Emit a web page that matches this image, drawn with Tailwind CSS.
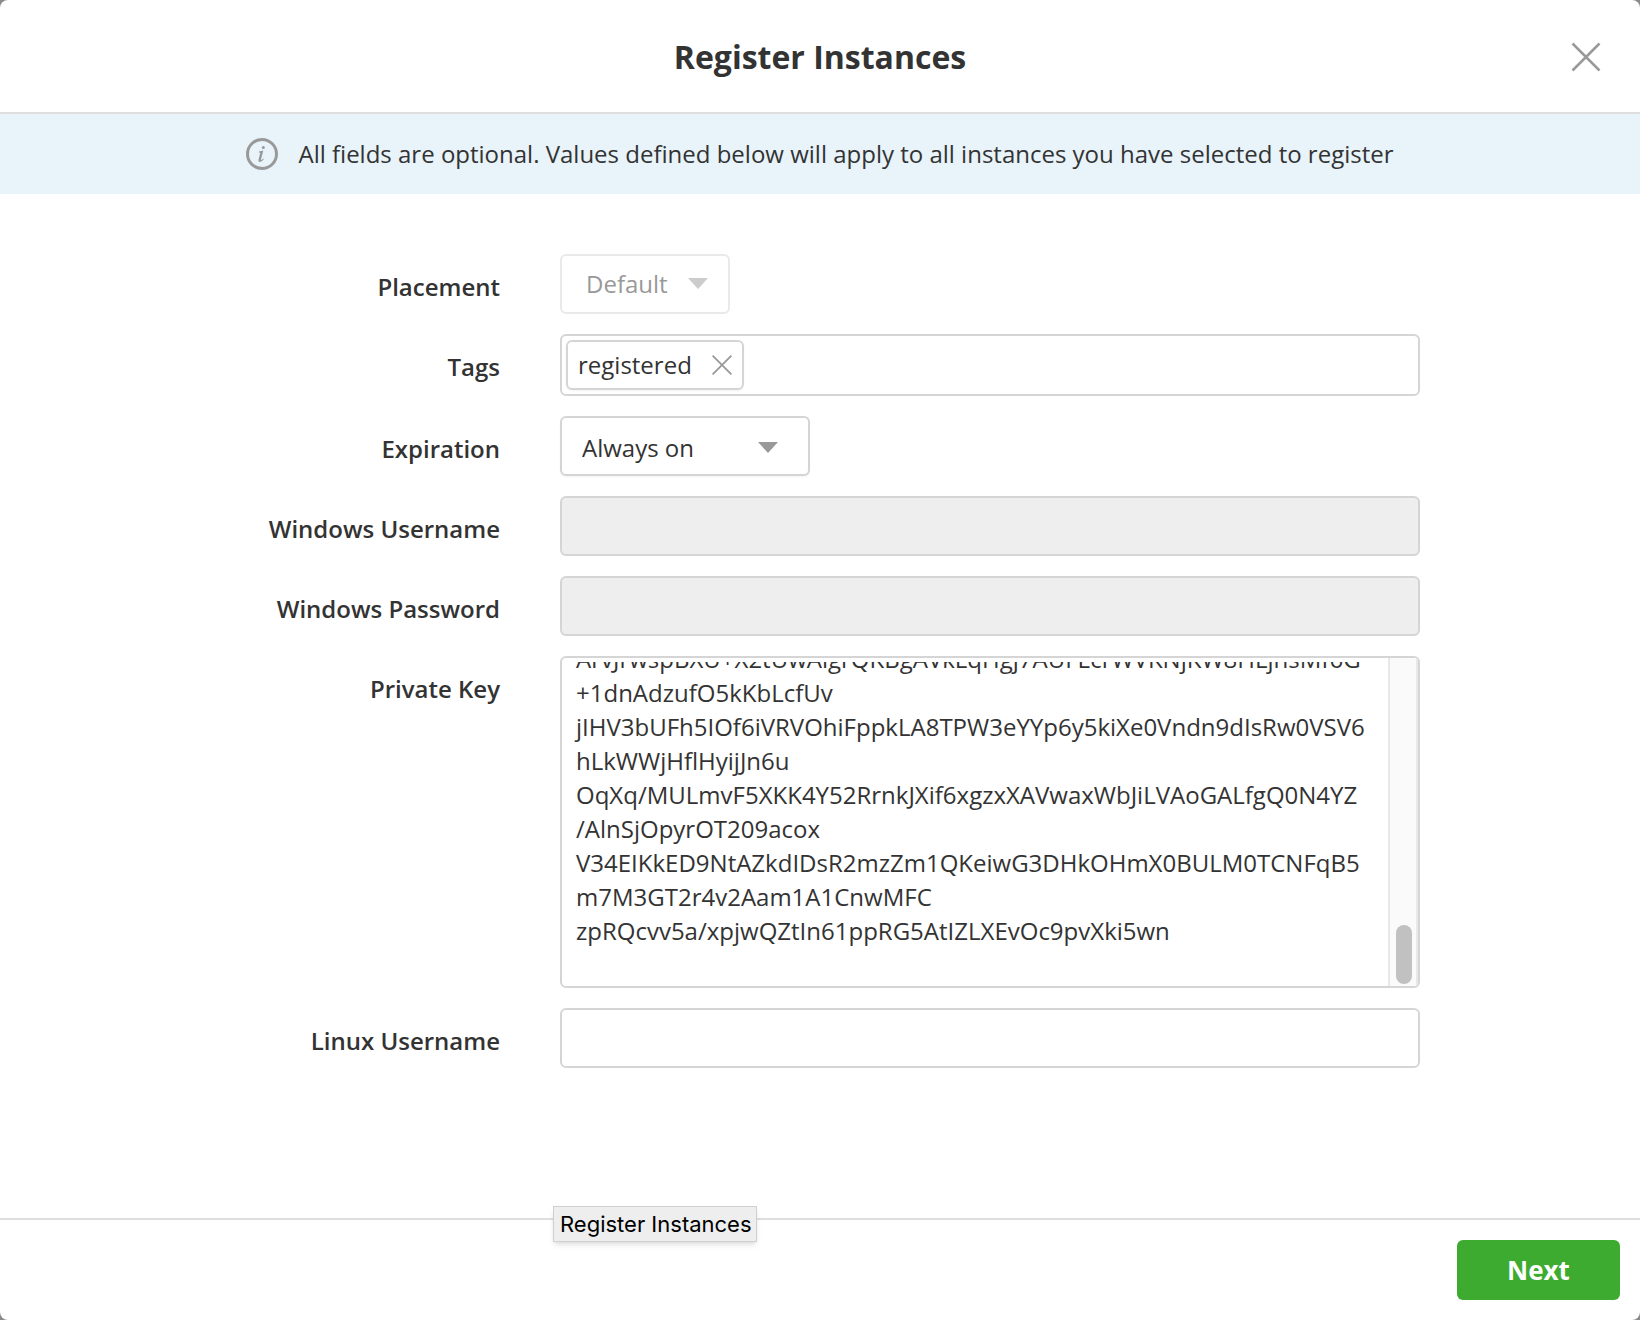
<!DOCTYPE html>
<html lang="en">
<head>
<meta charset="utf-8">
<title>Register Instances</title>
<meta name="viewport" content="width=device-width, initial-scale=1">
<script src="https://cdn.jsdelivr.net/npm/@tailwindcss/browser@4"></script>
</head>
<body class="bg-[#8a8a8a]">
<main class="flex min-h-screen flex-col overflow-hidden rounded-lg bg-white font-['Open_Sans',sans-serif] text-2xl/[34px] text-[#333]">

  <header class="grid h-[114px] grid-cols-[108px_1fr_108px] items-center border-b-2 border-[#dedede] pt-0.5">
    <h1 class="col-start-2 text-center text-[32px]/[44px] font-bold">Register Instances</h1>
    <button type="button" aria-label="Close" class="flex size-8 items-center justify-center justify-self-center text-[#999]">
      <svg class="size-8 shrink-0" viewBox="0 0 32 32" fill="none" stroke="currentColor" stroke-width="2.5"><path d="M2.500 2.500 29.500 29.500M29.500 2.500 2.500 29.500"/></svg>
    </button>
  </header>

  <p class="flex h-20 items-center justify-center gap-5 bg-[#e8f3fa]">
    <svg class="size-8 shrink-0" viewBox="0 0 32 32" aria-hidden="true"><circle cx="16" cy="16" r="14.500" fill="none" stroke="#999" stroke-width="3"/><path d="M13 13.500 17.300 12.600 15 21.600Q14.900 22.300 15.500 22.100L17.400 20.400 17.900 20.900Q15.800 24 13.800 24 12 24 12.500 21.800L14.300 14.800 12.900 14.400Z" fill="#999"/><circle cx="17.300" cy="9.600" r="1.500" fill="#999"/></svg>
    <span>All fields are optional. Values defined below will apply to all instances you have selected to register</span>
  </p>

  <form id="register" class="grid grow grid-cols-[500px_1fr] content-start gap-x-[60px] gap-y-5 pt-[60px] pr-[220px]">
    <label for="placement" class="pt-4 text-right font-semibold">Placement</label>
    <div class="relative w-[170px]">
      <select id="placement" disabled class="h-[60px] w-full appearance-none rounded-md border-2 border-[#e9e9e9] bg-white pl-6 text-[#999] opacity-100"><option>Default</option></select>
      <svg class="pointer-events-none absolute top-6 right-[22px] h-3 w-5" viewBox="0 0 20 12" aria-hidden="true"><path d="M0 0h20L10 11Z" fill="#ccc"/></svg>
    </div>

    <label for="tags" class="pt-4 text-right font-semibold">Tags</label>
    <div class="flex h-[62px] items-center gap-2 rounded-md border-2 border-[#d5d5d5] px-1">
      <span class="flex h-[50px] items-center gap-5 rounded-md border-2 border-[#d5d5d5] px-2.5 shadow-xs">registered
        <button type="button" aria-label="Remove registered" class="text-[#999]"><svg class="size-5" viewBox="0 0 20 20" fill="none" stroke="currentColor" stroke-width="1.800"><path d="M.6.6 19.400 19.400M19.400.6.6 19.400"/></svg></button>
      </span>
      <input id="tags" type="text" class="h-full min-w-0 grow outline-none">
    </div>

    <label for="expiration" class="pt-4 text-right font-semibold">Expiration</label>
    <div class="relative w-[250px]">
      <select id="expiration" class="h-[60px] w-full appearance-none rounded-md border-2 border-[#d5d5d5] bg-white pt-1 pl-5 shadow-xs"><option>Always on</option></select>
      <svg class="pointer-events-none absolute top-[26px] right-8 h-3 w-5" viewBox="0 0 20 12" aria-hidden="true"><path d="M0 0h20L10 11Z" fill="#999"/></svg>
    </div>

    <label for="win-user" class="pt-4 text-right font-semibold">Windows Username</label>
    <input id="win-user" type="text" disabled class="h-[60px] rounded-md border-2 border-[#d5d5d5] bg-[#eee] px-3.5">

    <label for="win-pass" class="pt-4 text-right font-semibold">Windows Password</label>
    <input id="win-pass" type="password" disabled class="h-[60px] rounded-md border-2 border-[#d5d5d5] bg-[#eee] px-3.5">

    <label for="private-key" class="pt-4 text-right font-semibold">Private Key</label>
    <div class="flex h-[332px] overflow-hidden rounded-md border-2 border-[#d5d5d5]">
      <textarea id="private-key" spellcheck="false" class="mt-1 h-80 min-w-0 grow resize-none overflow-x-hidden whitespace-pre pl-3.5 outline-none [scrollbar-width:none]">ArvJrwspBXU+X2tUwAlgrQKBgAVkLqHgj7AUFLcrWVKNjKW8HLjnsMf6G
+1dnAdzufO5kKbLcfUv
jIHV3bUFh5IOf6iVRVOhiFppkLA8TPW3eYYp6y5kiXe0Vndn9dIsRw0VSV6
hLkWWjHflHyijJn6u
OqXq/MULmvF5XKK4Y52RrnkJXif6xgzxXAVwaxWbJiLVAoGALfgQ0N4YZ
/AlnSjOpyrOT209acox
V34EIKkED9NtAZkdIDsR2mzZm1QKeiwG3DHkOHmX0BULM0TCNFqB5
m7M3GT2r4v2Aam1A1CnwMFC
zpRQcvv5a/xpjwQZtIn61ppRG5AtIZLXEvOc9pvXki5wn
</textarea>
      <div aria-hidden="true" class="flex w-[30px] shrink-0 items-end border-x-2 border-[#e8e8e8] bg-[#fafafa] pb-0.5 pl-1.5"><div class="h-[59px] w-4 shrink-0 rounded-full bg-[#c1c1c1]"></div></div>
    </div>

    <label for="linux-user" class="pt-4 text-right font-semibold">Linux Username</label>
    <input id="linux-user" type="text" class="h-[60px] rounded-md border-2 border-[#d5d5d5] px-3.5">
  </form>

  <footer class="relative flex justify-end border-t-2 border-[#dedede] p-5">
    <div role="tooltip" class="absolute -top-3.5 left-[553px] border border-[#d0d0d0] bg-[#eee] pr-1 pl-1.5 font-['Inter',sans-serif] text-[22px]/[34px] text-black shadow-md">Register Instances</div>
    <button type="submit" form="register" class="h-[60px] w-[163px] rounded-md bg-[#3dab30] text-[26px] font-bold text-white">Next</button>
  </footer>
</main>
<script>
  // Open the key box at the end of its text.
  const key = document.getElementById('private-key');
  key.scrollTop = key.scrollHeight;
</script>
</body>
</html>
